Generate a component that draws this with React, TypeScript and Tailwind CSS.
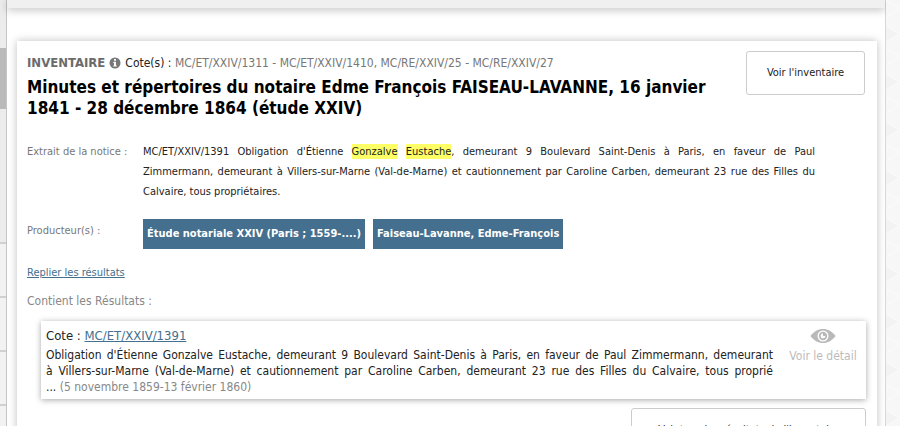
import React from 'react';

const producers = ['Étude notariale XXIV (Paris ; 1559-....)', 'Faiseau-Lavanne, Edme-François'];

const InfoIcon: React.FC = () => (
  <svg className="h-3 w-3 shrink-0" viewBox="0 0 12 12" aria-hidden="true">
    <circle cx="6" cy="6" r="5.5" fill="#777" />
    <path d="M5 2h2v1.7H5zM4.3 4.8H7v3.6h.8v1.2H4.3V8.4H5V6h-.7z" fill="#fff" />
  </svg>
);

const EyeIcon: React.FC = () => (
  <svg className="h-4 w-7" viewBox="0 0 28 16" aria-hidden="true">
    <path d="M1.500 8C5 3.200 9 1 14 1s9 2.200 12.500 7c-3.500 4.800-7.500 7-12.500 7S5 12.800 1.500 8z" fill="#b9b9b9" />
    <circle cx="14" cy="8" r="5.500" fill="#fff" />
    <circle cx="14" cy="8" r="4.200" fill="#b9b9b9" />
    <path d="M14 5.600a2.400 2.400 0 1 0 2.400 2.400H14z" fill="#fff" />
  </svg>
);

// Faint triangle wallpaper behind the page
const Wallpaper: React.FC = () => (
  <svg className="h-full w-full" aria-hidden="true">
    <defs>
      <pattern id="triangles" width="28" height="48" patternUnits="userSpaceOnUse">
        <rect width="28" height="48" fill="#f7f7f7" />
        <path d="M0 26L12 34L0 42z" fill="#f3f3f3" />
        <path d="M0 0L14 8L0 18M14 8L28 0M0 26L14 34L0 42" fill="none" stroke="#fcfcfc" />
      </pattern>
    </defs>
    <rect width="100%" height="100%" fill="url(#triangles)" />
  </svg>
);

const App: React.FC = () => {
  return (
    <div className="flex h-screen overflow-hidden bg-[#f7f7f7] font-['DejaVu_Sans_Condensed','DejaVu_Sans',sans-serif] text-[11px] text-[#222]">
      {/* Edge of the filter column */}
      <aside className="flex w-[7px] shrink-0 flex-col border-r border-[#c4c4c4] bg-[#ececec]">
        <div className="h-12" />
        <div className="h-[61px] bg-[#bababa]" />
        <div className="h-[135px] border-b-2 border-[#d0d0d0]" />
        <div className="h-[54px] border-b-2 border-[#d0d0d0] bg-[#f2f2f2]" />
        <div className="h-[54px] border-b-2 border-[#d0d0d0] bg-[#f2f2f2]" />
        <div className="h-[54px] border-b-2 border-[#d0d0d0] bg-[#f2f2f2]" />
        <div className="flex-1 bg-[#f2f2f2]" />
      </aside>

      <main className="min-w-0 flex-1 border-r border-[#d8d8d8] bg-white">
        <div className="h-2 bg-[#f0f0f0] shadow-[0_2px_8px_rgba(0,0,0,0.25)]" />

        <article className="mx-2.5 mt-[33px] mr-2 h-screen bg-white pt-2.5 pr-3 pl-2.5 shadow-[0_0_8px_rgba(0,0,0,0.25)]">
          <header className="flex items-start justify-between">
            <div className="min-w-0 flex-1 pr-7">
              <div className="flex h-6 items-center gap-1 text-xs">
                <span className="text-[13px] font-bold text-[#6b6b6b]">INVENTAIRE</span>
                <InfoIcon />
                <p>
                  Cote(s) : <span className="text-[#777]">MC/ET/XXIV/1311 - MC/ET/XXIV/1410, MC/RE/XXIV/25 - MC/RE/XXIV/27</span>
                </p>
              </div>
              <h1 className="mt-0.5 text-[17px] leading-[21px] font-bold text-black">
                Minutes et répertoires du notaire Edme François FAISEAU-LAVANNE, 16 janvier 1841 - 28 décembre 1864 (étude XXIV)
              </h1>
            </div>
            <button type="button" className="h-11 w-[119px] shrink-0 rounded-[3px] border border-[#ccc] bg-white">
              Voir l'inventaire
            </button>
          </header>

          <dl className="mt-[23px] grid grid-cols-[116px_1fr] gap-y-[17px] leading-5">
            <dt className="text-[#777]">Extrait de la notice :</dt>
            <dd className="mr-[50px] text-justify">
              MC/ET/XXIV/1391 Obligation d'Étienne <mark className="bg-[#ffff66] py-px text-inherit">Gonzalve</mark>{' '}
              <mark className="bg-[#ffff66] py-px text-inherit">Eustache</mark>, demeurant 9 Boulevard Saint-Denis à Paris, en faveur de
              Paul Zimmermann, demeurant à Villers-sur-Marne (Val-de-Marne) et cautionnement par Caroline Carben, demeurant 23 rue des
              Filles du Calvaire, tous propriétaires.
            </dd>
            <dt className="pt-0.5 text-[#777]">Producteur(s) :</dt>
            <dd className="flex gap-2">
              {producers.map((producer) => (
                <span key={producer} className="bg-[#456f8e] px-1 py-[5px] font-bold whitespace-nowrap text-white">
                  {producer}
                </span>
              ))}
            </dd>
          </dl>

          <a href="#resultats" className="mt-3.5 inline-block leading-5 text-[#456f8e] underline">
            Replier les résultats
          </a>

          <section id="resultats">
            <h2 className="mt-2 text-xs leading-5 text-[#888]">Contient les Résultats :</h2>
            <div className="mt-2.5 ml-3.5 -mr-px flex justify-between bg-white px-[5px] pt-[5px] pb-1 text-xs leading-4 shadow-[0_1px_6px_rgba(0,0,0,0.35)]">
              <div className="min-w-0 flex-1">
                <p className="mb-px text-[13px] leading-5">
                  Cote :{' '}
                  <a href="#notice" className="text-[#456f8e] underline">
                    MC/ET/XXIV/1391
                  </a>
                </p>
                <p className="text-justify">
                  Obligation d'Étienne Gonzalve Eustache, demeurant 9 Boulevard Saint-Denis à Paris, en faveur de Paul Zimmermann,
                  demeurant à&nbsp;Villers-sur-Marne (Val-de-Marne) et cautionnement par Caroline Carben, demeurant 23 rue des Filles du
                  Calvaire, tous proprié ...&nbsp;<span className="text-[#888]">(5&nbsp;novembre 1859-13 février 1860)</span>
                </p>
              </div>
              <button type="button" className="ml-3 flex w-[76px] shrink-0 flex-col items-center gap-1 pt-0.5 text-[#bbb]">
                <EyeIcon />
                <span className="whitespace-nowrap">Voir le détail</span>
              </button>
            </div>
            <div className="mt-[9px] -mr-px flex justify-end">
              <button type="button" className="h-11 w-[235px] rounded-[3px] border border-[#ccc] bg-white">
                Voir tous les résultats de l'inventaire
              </button>
            </div>
          </section>
        </article>
      </main>

      <div className="w-3.5 shrink-0">
        <Wallpaper />
      </div>
    </div>
  );
};

export default App;
